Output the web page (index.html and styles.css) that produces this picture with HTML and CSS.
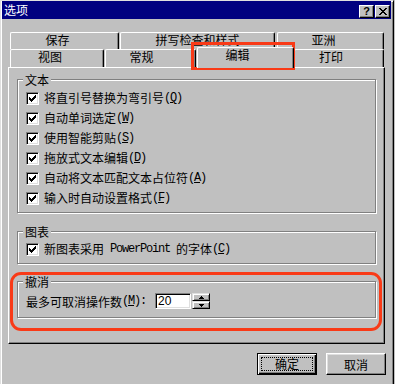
FILE: index.html
```
<!DOCTYPE html>
<html>
    <head>
        <meta charset="utf-8">
        <title>选项</title>
        <link rel="stylesheet" href="styles.css">
    </head>
    <body>
        <div class="window">
            <div class="titlebar">
                <span class="title">选项</span>
                <span class="cap-btn help">?</span>
                <span class="cap-btn close">
                    <svg width="8" height="7" viewBox="0 0 8 7"><path d="M0 0h2v1H0zM6 0h2v1H6zM1 1h2v1H1zM5 1h2v1H5zM2 2h4v1H2zM3 3h2v1H3zM2 4h4v1H2zM1 5h2v1H1zM5 5h2v1H5zM0 6h2v1H0zM6 6h2v1H6z"/></svg>
                </span>
            </div>

            <div class="tabs">
                <div class="tab-row upper">
                    <div class="tab tab-save">保存</div>
                    <div class="tab tab-spell">拼写检查和样式</div>
                    <div class="tab tab-asia">亚洲</div>
                </div>
                <div class="tab-row lower">
                    <div class="tab tab-view">视图</div>
                    <div class="tab tab-general">常规</div>
                    <div class="tab tab-edit active">编辑</div>
                    <div class="tab tab-print">打印</div>
                </div>
            </div>

            <div class="panel">
                <fieldset class="group text-group">
                    <legend>文本</legend>
                    <div class="check-row"><span class="check"><svg width="7" height="7" viewBox="0 0 7 7"><path d="M0 2h1v3H0zM1 3h1v3H1zM2 4h1v3H2zM3 3h1v3H3zM4 2h1v3H4zM5 1h1v3H5zM6 0h1v3H6z"/></svg></span>将直引号替换为弯引号<span class="key">(<u>Q</u>)</span></div>
                    <div class="check-row"><span class="check"><svg width="7" height="7" viewBox="0 0 7 7"><path d="M0 2h1v3H0zM1 3h1v3H1zM2 4h1v3H2zM3 3h1v3H3zM4 2h1v3H4zM5 1h1v3H5zM6 0h1v3H6z"/></svg></span>自动单词选定<span class="key">(<u>W</u>)</span></div>
                    <div class="check-row"><span class="check"><svg width="7" height="7" viewBox="0 0 7 7"><path d="M0 2h1v3H0zM1 3h1v3H1zM2 4h1v3H2zM3 3h1v3H3zM4 2h1v3H4zM5 1h1v3H5zM6 0h1v3H6z"/></svg></span>使用智能剪贴<span class="key">(<u>S</u>)</span></div>
                    <div class="check-row"><span class="check"><svg width="7" height="7" viewBox="0 0 7 7"><path d="M0 2h1v3H0zM1 3h1v3H1zM2 4h1v3H2zM3 3h1v3H3zM4 2h1v3H4zM5 1h1v3H5zM6 0h1v3H6z"/></svg></span>拖放式文本编辑<span class="key">(<u>D</u>)</span></div>
                    <div class="check-row"><span class="check"><svg width="7" height="7" viewBox="0 0 7 7"><path d="M0 2h1v3H0zM1 3h1v3H1zM2 4h1v3H2zM3 3h1v3H3zM4 2h1v3H4zM5 1h1v3H5zM6 0h1v3H6z"/></svg></span>自动将文本匹配文本占位符<span class="key">(<u>A</u>)</span></div>
                    <div class="check-row"><span class="check"><svg width="7" height="7" viewBox="0 0 7 7"><path d="M0 2h1v3H0zM1 3h1v3H1zM2 4h1v3H2zM3 3h1v3H3zM4 2h1v3H4zM5 1h1v3H5zM6 0h1v3H6z"/></svg></span>输入时自动设置格式<span class="key">(<u>F</u>)</span></div>
                </fieldset>

                <fieldset class="group chart-group">
                    <legend>图表</legend>
                    <div class="check-row"><span class="check"><svg width="7" height="7" viewBox="0 0 7 7"><path d="M0 2h1v3H0zM1 3h1v3H1zM2 4h1v3H2zM3 3h1v3H3zM4 2h1v3H4zM5 1h1v3H5zM6 0h1v3H6z"/></svg></span>新图表采用<span class="key">&nbsp;PowerPoint&nbsp;</span>的字体<span class="key">(<u>C</u>)</span></div>
                </fieldset>

                <fieldset class="group undo-group">
                    <legend>撤消</legend>
                    <div class="undo-row">
                        最多可取消操作数<span class="key">(<u>M</u>):</span>
                        <input class="num" value="20">
                        <div class="spin">
                            <span class="spin-btn"><svg width="5" height="3" viewBox="0 0 5 3"><path d="M2 0h1v1h1v1h1v1H0V2h1V1h1z"/></svg></span>
                            <span class="spin-btn"><svg width="5" height="3" viewBox="0 0 5 3"><path d="M0 0h5v1H4v1H3v1H2V2H1V1H0z"/></svg></span>
                        </div>
                    </div>
                </fieldset>
            </div>

            <div class="actions">
                <button class="btn default"><span class="focus">确定</span></button>
                <button class="btn">取消</button>
            </div>

            <!-- red highlight marks drawn over the dialog -->
            <div class="mark mark-tab"></div>
            <div class="mark mark-undo"></div>
        </div>
    </body>
</html>
```

FILE: styles.css
```
body{
    margin: 0;
    background-color: #c0c0c0;
    font-family: "Noto Sans CJK SC", "Liberation Sans", sans-serif;
    font-size: 12px;
    color: #000;
    overflow: hidden;
}
.window{
    position: relative;
    box-sizing: border-box;
    width: 394px;
    height: 392px;
    padding: 0 2px 0 1px;
    border: 1px solid;
    border-color: #dfdfdf #000 #000 #dfdfdf;
    box-shadow: inset 1px 1px #fff, inset -1px -1px #808080;
    background-color: #c0c0c0;
}
.titlebar{
    display: flex;
    height: 18px;
    padding: 0 1px 0 2px;
    background-color: #000080;
    color: #fff;
}
.title{
    flex: 1;
    line-height: 18px;
}
.cap-btn{
    display: flex;
    align-items: center;
    justify-content: center;
    box-sizing: border-box;
    width: 15px;
    height: 13px;
    margin-top: 4px;
    border: 1px solid;
    border-color: #fff #000 #000 #fff;
    box-shadow: inset -1px -1px #808080;
    background-color: #c0c0c0;
    color: #000;
}
.help{
    margin-right: 1px;
    font-family: "Liberation Sans", sans-serif;
    font-weight: bold;
    font-size: 11px;
    line-height: 11px;
}
.tabs{
    margin: 13px 0 0 8px;
}
.tab-row{
    display: flex;
}
.tab-row.upper{
    height: 17px;
}
.tab-row.lower{
    height: 18px;
}
.tab{
    box-sizing: border-box;
    height: 100%;
    padding-right: 14px;
    border: 1px solid #fff;
    border-right-color: #000;
    border-bottom: 0;
    border-radius: 2px 2px 0 0;
    box-shadow: inset -1px 0 #808080;
    background-color: #c0c0c0;
    text-align: center;
    white-space: nowrap;
}
.upper .tab{
    line-height: 13px;
}
.lower .tab{
    line-height: 14px;
}
.tab-save{ width: 109px; }
.tab-spell{ width: 155px; margin-left: 1px; padding-right: 0; }
.tab-asia{ width: 107px; margin-left: 2px; }
.tab-view{ width: 94px; }
.tab-general{ width: 91px; margin-left: 1px; padding-right: 18px; }
.tab-edit{ width: 97px; margin-left: 1px; padding-right: 16px; }
.tab-print{ width: 90px; padding-right: 16px; }
.lower .tab.active{
    position: relative;
    z-index: 1;
    height: 21px;
    margin-top: -2px;
    line-height: 13px;
}
.panel{
    box-sizing: border-box;
    width: 377px;
    height: 277px;
    margin-left: 6px;
    padding: 5px 0 0 8px;
    border: 1px solid;
    border-color: #fff #000 #000 #fff;
    box-shadow: inset -1px -1px #808080;
}
.group{
    box-sizing: border-box;
    width: 359px;
    min-width: 0;
    margin: 0;
    padding: 0 0 4px 8px;
    border: 1px solid #808080;
    box-shadow: inset 1px 1px #fff, 1px 1px #fff;
}
.group legend{
    position: relative;
    margin-left: -3px;
    padding: 0 2px;
    line-height: 13px;
    background-color: #c0c0c0;
}
.text-group{
    padding-top: 2px;
}
.chart-group{
    margin-top: 12px;
    padding-top: 1px;
}
.undo-group{
    margin-top: 11px;
    padding-top: 3px;
    padding-bottom: 6px;
}
.check-row{
    display: flex;
    align-items: center;
    height: 20px;
    line-height: 20px;
    white-space: nowrap;
}
.check{
    display: flex;
    align-items: center;
    justify-content: center;
    box-sizing: border-box;
    width: 13px;
    height: 13px;
    margin-right: 5px;
    border: 1px solid;
    border-color: #808080 #fff #fff #808080;
    box-shadow: inset 1px 1px #000, inset -1px -1px #dfdfdf;
    background-color: #fff;
}
.key{
    font-family: "Liberation Mono", monospace;
    letter-spacing: -1.2px;
}
.undo-row{
    display: flex;
    align-items: center;
    height: 20px;
    white-space: nowrap;
}
.num{
    box-sizing: border-box;
    width: 36px;
    height: 16px;
    margin: 0 0 0 9px;
    padding: 0 0 0 2px;
    border: 1px solid;
    border-color: #808080 #fff #fff #808080;
    box-shadow: inset 1px 1px #000, inset -1px -1px #dfdfdf;
    background-color: #fff;
    font-family: "Liberation Sans", sans-serif;
    font-size: 12px;
    color: #000;
    outline: none;
}
.spin{
    display: flex;
    flex-direction: column;
    width: 18px;
    height: 16px;
    margin-left: 1px;
}
.spin-btn{
    display: flex;
    align-items: center;
    justify-content: center;
    box-sizing: border-box;
    height: 8px;
    border: 1px solid;
    border-color: #dfdfdf #000 #000 #dfdfdf;
    box-shadow: inset 1px 1px #fff, inset -1px -1px #808080;
}
.actions{
    display: flex;
    justify-content: flex-end;
    gap: 9px;
    margin-top: 9px;
    padding-right: 5px;
}
.btn{
    box-sizing: border-box;
    width: 60px;
    height: 22px;
    padding: 0;
    border: 1px solid;
    border-color: #fff #000 #000 #fff;
    box-shadow: inset -1px -1px #808080, inset 1px 1px #dfdfdf;
    background-color: #c0c0c0;
    font-family: "Noto Sans CJK SC", sans-serif;
    font-size: 12px;
    color: #000;
}
.btn.default{
    padding: 3px;
    border-color: #000;
    box-shadow: inset 1px 1px #fff, inset -1px -1px #000, inset -2px -2px #808080;
}
.focus{
    display: block;
    box-sizing: border-box;
    height: 100%;
    border: 1px dotted #000;
    line-height: 12px;
}
.mark{
    position: absolute;
    box-sizing: border-box;
    border: 3px solid #f93a17;
    pointer-events: none;
}
.mark-tab{
    left: 190px;
    top: 41px;
    width: 104px;
    height: 28px;
}
.mark-undo{
    left: 9px;
    top: 271px;
    width: 372px;
    height: 59px;
    border-radius: 11px;
}
```
